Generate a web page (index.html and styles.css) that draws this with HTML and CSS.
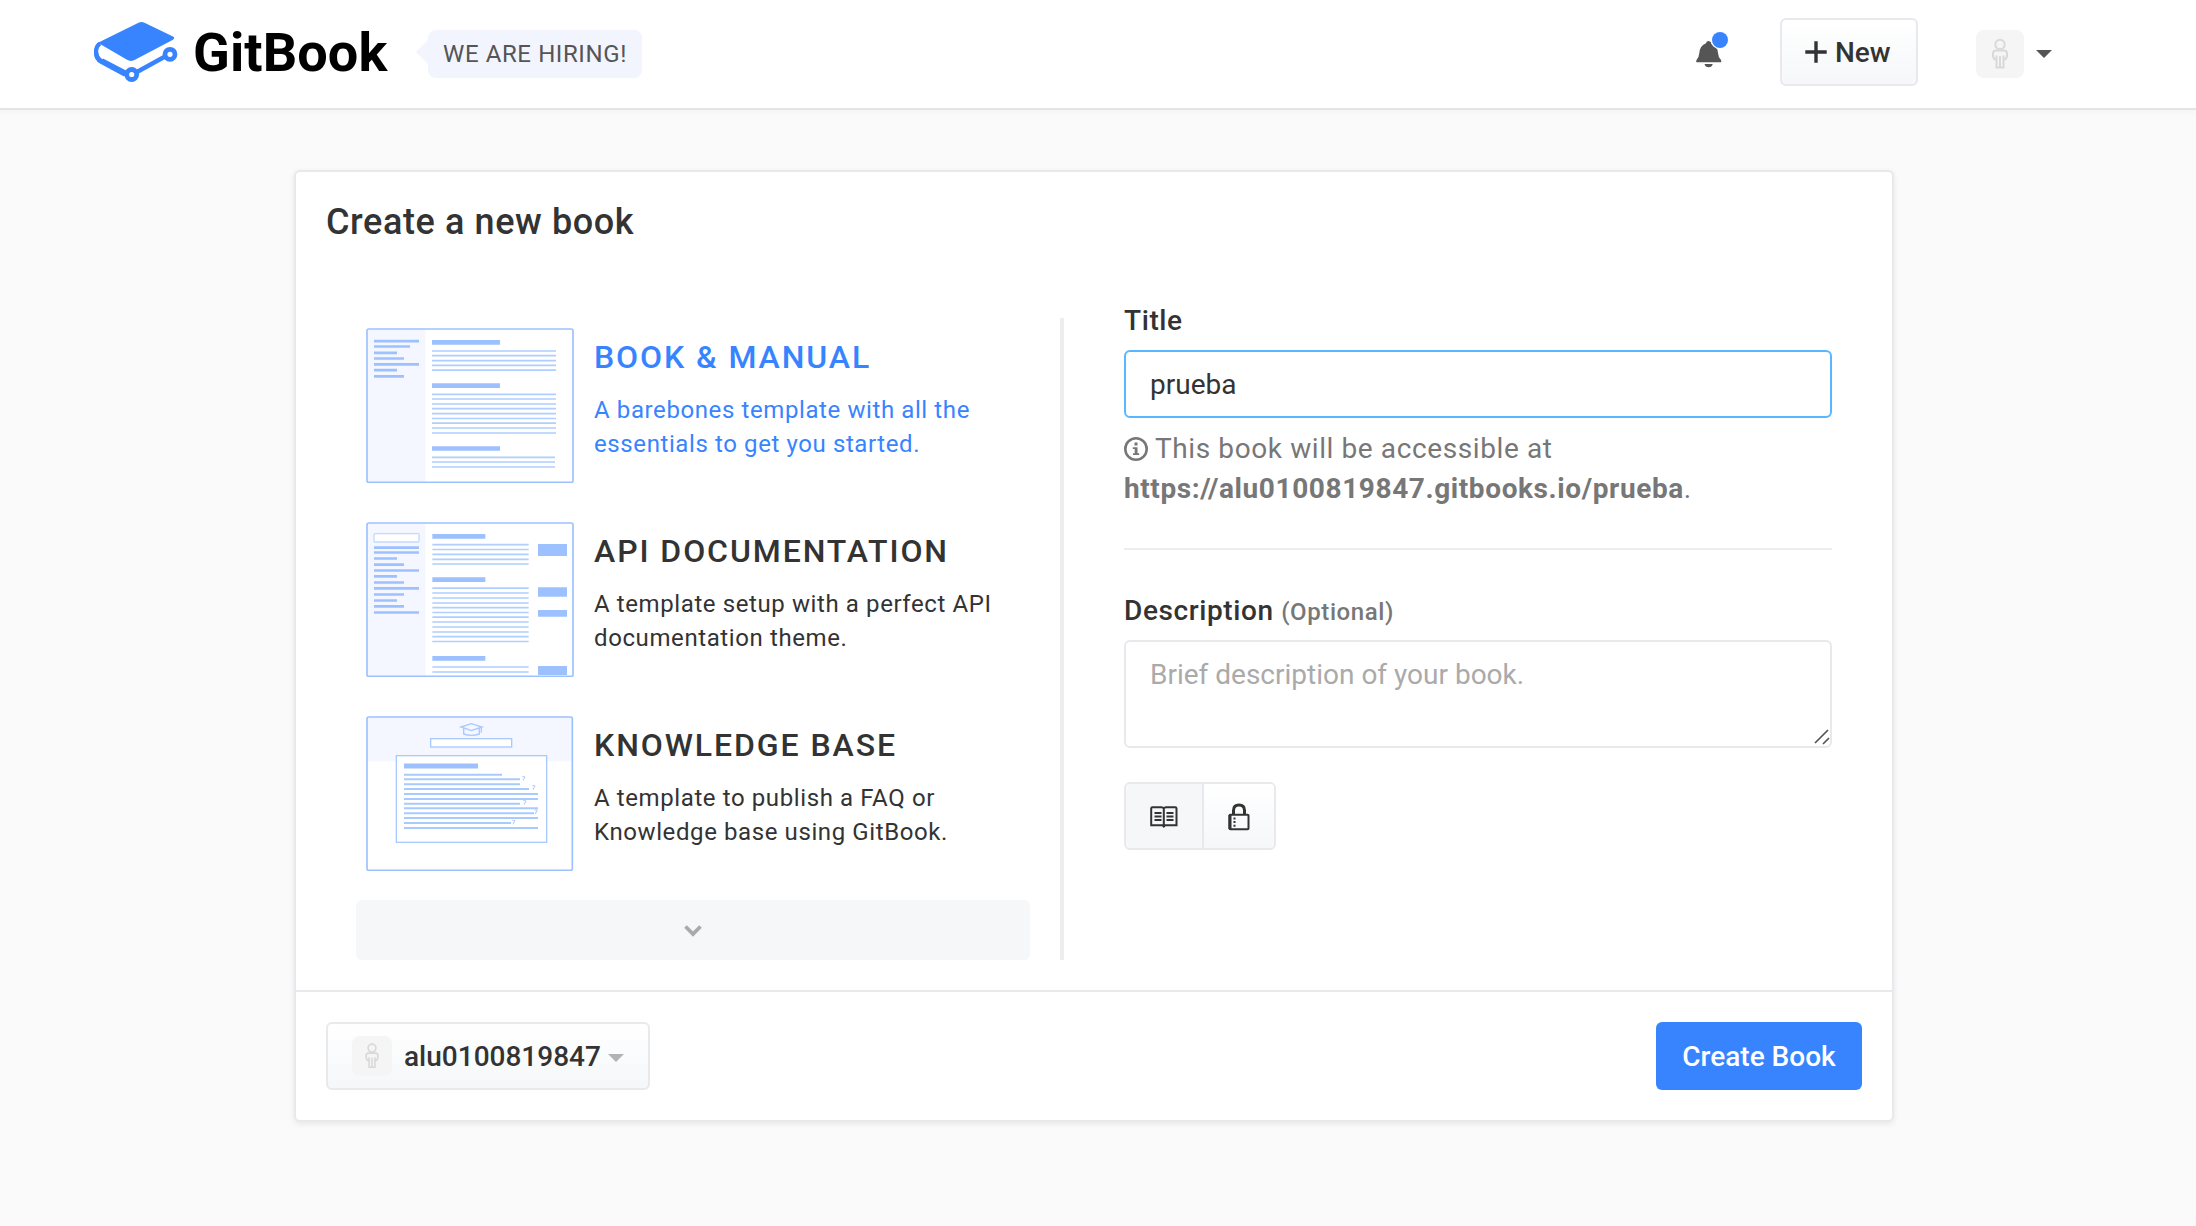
FILE: index.html
```html
<!DOCTYPE html>
<html lang="en">
<head>
<meta charset="utf-8">
<title>Create a new book · GitBook</title>
<link rel="stylesheet" href="styles.css">
</head>
<body>
<svg class="sprite" width="0" height="0" aria-hidden="true">
  <symbol id="person" viewBox="0 0 48 48">
    <g fill="none" stroke="#d9d9d9" stroke-width="2">
      <circle cx="24" cy="14.500" r="4.700"/>
      <path d="M20.500 37.500V30Q17 29 17 25.500V23.500Q17 20.500 20 20.500H28Q31 20.500 31 23.500V25.500Q31 29 27.500 30V37.500ZM20.500 30V25.500M27.500 30V25.500M24 26V37"/>
    </g>
  </symbol>
</svg>

<header class="header">
  <a class="brand">
    <svg class="brand-mark" width="84" height="60" viewBox="0 0 84 60">
      <path fill="#3884ff" d="M44.500 .8Q47.500 -.8 50.500 .8L79 14.500Q81.500 16 79 17.800L41 37.800Q37 40 33 37.800L6 22Q4 21.300 6 19.800Z"/>
      <path fill="none" stroke="#3884ff" stroke-width="4.200" d="M6 21.500Q2 24 2 30Q2 36.500 7.500 39.500L33 53"/>
      <path fill="#3884ff" d="M6 20Q0 23 0 31Q0 38 6 41.500L30 54.500V49L9 37.500Q4 35 4 28Q4 25 6 24Z"/>
      <path stroke="#3884ff" stroke-width="4.400" d="M8 38.500L34 52M42 50.500L72 34"/>
      <g fill="#fff" stroke="#3884ff" stroke-width="4.800"><circle cx="37.700" cy="52.500" r="5"/><circle cx="76" cy="32.300" r="5"/></g>
    </svg>
    <span class="brand-name">GitBook</span>
  </a>
  <a class="hiring"><span>WE ARE HIRING!</span></a>
  <div class="header-actions">
    <div class="bell">
      <svg width="36" height="40" viewBox="0 0 36 40">
        <path fill="#555" d="M14.500 9Q17 9 17.500 11.500Q23.500 14 24 21Q24.200 25.500 27 28Q27.700 29.800 27 30.200H2.500Q1.800 29.800 2.500 28Q5 25.500 5.300 21Q6 13.500 12 11.300Q12.500 9 14.500 9ZM10.500 32H18.700Q18 35.200 14.600 35.200Q11.300 35.200 10.500 32Z"/>
        <circle cx="26" cy="8" r="9.300" fill="#fff"/><circle cx="26" cy="8" r="8" fill="#3884ff"/>
      </svg>
    </div>
    <button class="btn btn-new">
      <svg width="22" height="22" viewBox="0 0 22 22"><path stroke="#333" stroke-width="3.400" d="M0.300 11H21.700M11 .3V21.700"/></svg>
      <span class="btn-label">New</span>
    </button>
    <div class="account">
      <svg class="avatar" width="48" height="48"><use href="#person"/></svg>
      <svg width="16" height="8" viewBox="0 0 16 8"><path fill="#555" d="M0 0H16L8 8Z"/></svg>
    </div>
  </div>
</header>

<main class="card">
  <h1 class="card-title">Create a new book</h1>
  <div class="card-body">
    <section class="templates">
      <article class="template active">
        <svg class="thumb" width="208" height="155" viewBox="48 54 624 465">
          <rect x="51" y="57" width="618" height="459" rx="4" fill="#fff"/>
          <path fill="#f4f7ff" d="M51 57H226V516H51Z"/>
          <g stroke="#9dc1ff" stroke-width="8"><path d="M72 93.500H207M72 109.500H180M72 128.500H141M72 145.500H162M72 163H207M72 180.500H141M72 199H162"/><path stroke-width="14" d="M246 97H450M246 227H450M246 415.500H450"/></g>
          <path stroke="#b0ceff" stroke-width="5" d="M246 123H618M246 137H618M246 152H618M246 166H618M246 180.500H618M246 253H618M246 267H618M246 282H618M246 296H618M246 311H618M246 325.500H618M246 339.500H618M246 354H618M246 369H618M246 442H615M246 456H615M246 471H615"/>
          <rect x="51" y="57" width="618" height="460" rx="5" fill="none" stroke="#9dc1ff" stroke-width="5"/>
        </svg>
        <div class="template-text"><h2>BOOK &amp; MANUAL</h2><p>A barebones template with all the<br>essentials to get you started.</p></div>
      </article>
      <article class="template">
        <svg class="thumb" width="208" height="155" viewBox="48 36 624 465">
          <rect x="51" y="39" width="618" height="459" rx="4" fill="#fff"/>
          <path fill="#f4f7ff" d="M51 39H226V498H51Z"/>
          <rect x="72" y="71" width="135" height="25" rx="3" fill="#fff" stroke="#c3d9ff" stroke-width="4"/>
          <g stroke="#9dc1ff" stroke-width="8"><path d="M72 113H207M72 127.500H207M72 145.500H141M72 164H162M72 181.500H207M72 199H141M72 217.500H162M72 235H207M72 253.500H162M72 271.500H141M72 289H162M72 307.500H207"/><path stroke-width="14" d="M247 79H406M247 209H406M247 445H406"/></g>
          <path stroke="#b0ceff" stroke-width="5" d="M247 104H536M247 118.500H536M247 133H536M247 148H536M247 162H536M247 234.500H536M247 249H536M247 264H536M247 279H536M247 293H536M247 307.500H536M247 321.500H536M247 336H536M247 351H536M247 366H536M247 380H536M247 394.500H536M247 471H536M247 486H536"/>
          <path fill="#9dc1ff" d="M564 102H651V138H564ZM564 232H651V260H564ZM564 300H651V320H564ZM564 468H651V495H564Z"/>
          <rect x="51" y="39" width="618" height="460" rx="5" fill="none" stroke="#9dc1ff" stroke-width="5"/>
        </svg>
        <div class="template-text"><h2>API DOCUMENTATION</h2><p>A template setup with a perfect API<br>documentation theme.</p></div>
      </article>
      <article class="template">
        <svg class="thumb" width="208" height="155" viewBox="48 48 624 465">
          <rect x="51" y="51" width="615" height="459" rx="4" fill="#fff"/>
          <path fill="#f4f7ff" d="M51 51H666V184H51Z"/>
          <g fill="none" stroke="#a9c9ff" stroke-width="4"><path d="M333 81L364 71L396 81L364 92ZM341 84V102Q364 110 388 102V84M394 81V98"/><rect x="242" y="116" width="243" height="25" fill="#fff"/><rect x="139" y="167" width="451" height="260" fill="#fff"/></g>
          <path stroke="#9dc1ff" stroke-width="15" d="M162 198H384"/>
          <path stroke="#a9caff" stroke-width="6" d="M162 224H456M162 238H510M162 253H510M162 267H537M162 282H564M162 297H564M162 311H510M162 325H564M162 340H552M162 354H564M162 369H483M162 384H564"/>
          <path fill="none" stroke="#a9c9ff" stroke-width="3" d="M517 230H524V235L520 237V241M547 257H554V262L550 264V269M520 302H527V307L523 309V314M554 330H561V335L557 337V342M487 361H494V366L490 368V373"/>
          <rect x="51" y="51" width="616" height="460" rx="5" fill="none" stroke="#9dc1ff" stroke-width="5"/>
        </svg>
        <div class="template-text"><h2>KNOWLEDGE BASE</h2><p>A template to publish a FAQ or<br>Knowledge base using GitBook.</p></div>
      </article>
      <button class="more" aria-label="More templates"><svg width="18" height="12" viewBox="0 0 18 12"><path fill="none" stroke="#aaa" stroke-width="3.800" d="M1.500 1.500L9 9L16.500 1.500"/></svg></button>
    </section>

    <section class="form">
      <label class="label">Title</label>
      <input class="field" type="text" value="prueba">
      <p class="help">
        <svg width="24" height="24" viewBox="0 0 24 24"><circle cx="12" cy="12" r="10.700" fill="none" stroke="#777" stroke-width="2.600"/><path fill="#777" d="M10.500 5.500H13.500V8.500H10.500ZM8.800 10.300H13.500V16.200H15.200V18H9V16.200H10.700V12H8.800Z"/></svg>
        This book will be accessible at<br><strong>https://alu0100819847.gitbooks.io/prueba</strong>.
      </p>
      <hr class="rule">
      <label class="label">Description <small>(Optional)</small></label>
      <div class="area-wrap">
        <textarea class="field area" placeholder="Brief description of your book."></textarea>
        <svg class="grip" width="16" height="16" viewBox="0 0 16 16"><path stroke="#555" stroke-width="1.700" d="M1 14L14 1M9 15L15 9"/></svg>
      </div>
      <div class="visibility">
        <button class="seg seg-on" aria-label="Public"><svg width="28" height="22" viewBox="0 0 28 22"><path fill="none" stroke="#333" stroke-width="2" d="M13.800 21V2.500Q13 1.300 11.500 1.300H2.500Q1.200 1.300 1.200 2.500V19.300H12.500L13.800 20.500L15 19.300H26.500V2.500Q26.500 1.300 25.200 1.300H16Q14.500 1.300 13.800 2.500M4.500 7H11.500M4.500 10.500H11.500M4.500 14H11.500M16.500 7H23.500M16.500 10.500H23.500M16.500 14H23.500"/></svg></button>
        <button class="seg" aria-label="Private"><svg width="22" height="28" viewBox="0 0 22 28"><path fill="none" stroke="#333" stroke-width="2" d="M1.500 12.200Q1.500 11.700 2.200 11.700H19.700Q20.500 11.700 20.500 12.500V25.500Q20.500 26.300 19.700 26.300H2.500Q1.500 26.300 1.500 25.500Z"/><path fill="none" stroke="#333" stroke-width="3" d="M2 12V26M5.500 11V7.500Q5.500 2 11 2Q16.500 2 16.500 7.500V11"/><path fill="#333" d="M5.500 14.500H7.500V16.500H5.500ZM5.500 18H7.500V20H5.500ZM5.500 21.700H7.500V23.700H5.500Z"/></svg></button>
      </div>
    </section>
  </div>
  <footer class="card-footer">
    <button class="btn btn-owner">
      <svg class="avatar" width="40" height="40"><use href="#person"/></svg>
      <span class="owner btn-label">alu0100819847</span>
      <svg class="owner-caret" width="16" height="8" viewBox="0 0 16 8"><path fill="#b3b3b3" d="M0 0H16L8 8Z"/></svg>
    </button>
    <button class="btn-primary">Create Book</button>
  </footer>
</main>
</body>
</html>
```
FILE: styles.css
```css
* { box-sizing: border-box; }
body { margin: 0; min-height: 1226px; background: #fafafa; color: #333; font: 400 28px/40px Roboto, sans-serif; letter-spacing: .6px; }
h1, h2, p { margin: 0; }
button { margin: 0; padding: 0; font: inherit; color: inherit; letter-spacing: 0; }
svg { display: block; flex: none; }
.sprite { position: absolute; }

.header { display: flex; align-items: center; height: 110px; padding: 0 144px 4px 94px; background: #fff; border-bottom: 2px solid #e4e4e4; box-shadow: 0 2px 6px rgba(0,0,0,.03); }
.brand { display: flex; align-items: center; gap: 15px; color: #000; }
.brand-name { width: 199px; padding-top: 2px; font-size: 54px; font-weight: 700; line-height: 60px; letter-spacing: .1px; }
.hiring { position: relative; display: flex; align-items: center; width: 214px; height: 48px; margin: 4px 0 0 36px; padding-left: 15px; border-radius: 8px; background: #f2f4fe; color: #555; font-size: 24px; }
.hiring::before { content: ""; position: absolute; left: -12px; top: 10px; border: solid transparent; border-width: 12px 12px 12px 0; border-right-color: #f2f4fe; }
.header-actions { display: flex; align-items: center; margin-left: auto; }
.bell { margin-right: 50px; }
.btn { display: flex; align-items: center; height: 68px; border: 2px solid #e8e8ed; border-radius: 6px; background: linear-gradient(#fff, #f5f7f9); font-weight: 500; }
.btn-label { padding-top: 2px; }
.btn-new { width: 138px; padding-left: 23px; gap: 8px; }
.account { display: flex; align-items: center; gap: 12px; margin: 4px 0 0 58px; }
.avatar { border-radius: 8px; background: #f5f5f5; }

.card { width: 1600px; margin: 60px 0 0 294px; border: 2px solid #e8e8ed; border-radius: 6px; background: #fff; box-shadow: 0 2px 6px rgba(0,0,0,.08); }
.card-title { padding: 25px 30px 0; font-size: 36px; font-weight: 500; line-height: 50px; }
.card-body { display: flex; height: 743px; padding: 71px 60px 30px; }
.templates { width: 708px; padding-right: 30px; border-right: 4px solid #ededed; }
.template { display: flex; height: 194px; padding: 10px 10px 0; gap: 20px; }
.template-text { padding-top: 8px; }
.template h2 { font-size: 32px; font-weight: 500; line-height: 42px; letter-spacing: 1.92px; }
.template p { margin-top: 15px; font-size: 24px; line-height: 34px; }
.active { color: #3884ff; }
.more { display: flex; align-items: center; justify-content: center; width: 100%; height: 60px; padding-top: 2px; border: 0; border-radius: 6px; background: #f5f7f9; }
.form { flex: 1; padding: 0 0 0 60px; }
.label { display: block; height: 32px; padding-top: 1px; line-height: 4px; font-weight: 500; }
.label small { font-size: 24px; color: #777; }
.field { display: block; width: 708px; height: 68px; margin: 0; padding: 0 24px; border: 2px solid #58b7ff; border-radius: 6px; outline: 0; background: #fff; color: #333; font: inherit; letter-spacing: 0; }
.help { margin-top: 11px; color: #777; }
.help svg { display: inline-block; vertical-align: -3px; }
.rule { height: 2px; margin: 39px 0 58px; border: 0; background: #ededed; }
.area-wrap { position: relative; }
.area { height: 108px; padding: 13px 24px; border-color: #e8e8ed; resize: none; }
.area::placeholder { color: #aaa; }
.grip { position: absolute; right: 2px; bottom: 3px; }
.visibility { display: flex; width: 152px; height: 68px; margin-top: 34px; border: 2px solid #e8e8ed; border-radius: 6px; overflow: hidden; }
.seg { display: flex; flex: 1; align-items: center; justify-content: center; padding-top: 1px; border: 0; background: linear-gradient(#fff, #f5f7f9); }
.seg-on { flex: none; width: 78px; border-right: 2px solid #e8e8ed; background: #f5f7f9; }
.card-footer { display: flex; align-items: center; justify-content: space-between; height: 130px; padding: 0 30px; border-top: 2px solid #e8e8ed; }
.btn-owner { width: 324px; padding-left: 24px; }
.owner { margin: 0 7px 0 12px; }
.owner-caret { margin-top: 4px; }
.btn-primary { width: 206px; height: 68px; padding-top: 2px; border: 0; border-radius: 6px; background: #3884ff; color: #fff; font-weight: 500; }
```
